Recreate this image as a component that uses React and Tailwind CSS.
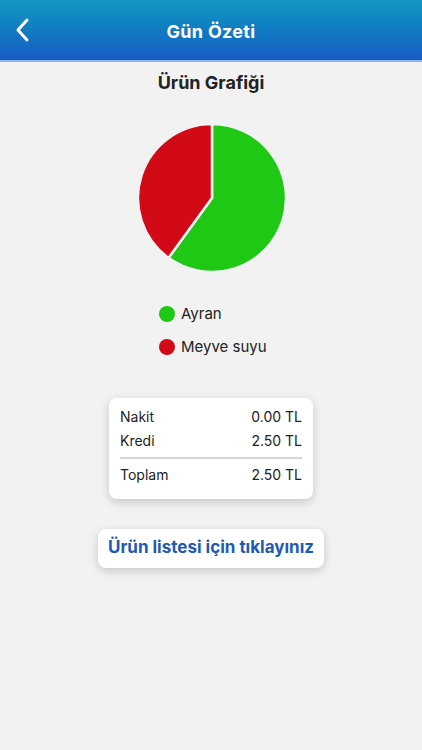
import React from "react";

const font = { fontFamily: "Inter, 'Noto Sans', sans-serif" };

const slices = [
  { name: "Ayran", value: 60, color: "#1ec814" },
  { name: "Meyve suyu", value: 40, color: "#d20a18" },
];

const PieChart = () => {
  const cx = 75;
  const cy = 75;
  const r = 74;
  const total = slices.reduce((s, x) => s + x.value, 0);
  let start = 0;

  return (
    <svg width="150" height="150" viewBox="0 0 150 150">
      {slices.map((s) => {
        const a0 = (start / total) * Math.PI * 2;
        start += s.value;
        const a1 = (start / total) * Math.PI * 2;
        const x0 = cx + r * Math.sin(a0);
        const y0 = cy - r * Math.cos(a0);
        const x1 = cx + r * Math.sin(a1);
        const y1 = cy - r * Math.cos(a1);
        const large = a1 - a0 > Math.PI ? 1 : 0;
        return (
          <path
            key={s.name}
            d={`M${cx},${cy} L${x0},${y0} A${r},${r} 0 ${large},1 ${x1},${y1} Z`}
            fill={s.color}
            stroke="#f2f2f2"
            strokeWidth="2.5"
            strokeLinejoin="round"
          />
        );
      })}
    </svg>
  );
};

const Row = ({ label, value }) => (
  <div className="flex items-center justify-between h-6 text-[14px] text-[#222]">
    <span>{label}</span>
    <span>{value}</span>
  </div>
);

export default function App() {
  return (
    <div className="w-[422px] h-[750px] bg-[#f2f2f2] flex flex-col" style={font}>
      {/* Header */}
      <div className="h-[62px] pt-[3px] bg-gradient-to-b from-[#1398c0] to-[#1a5bc4] border-b-2 border-[#8fb4ee] flex items-center relative">
        <button className="absolute left-[14px] top-[17px] text-white">
          <svg width="18" height="26" viewBox="0 0 18 26" fill="none">
            <path d="M13 3 L4 13 L13 23" stroke="white" strokeWidth="3" strokeLinecap="round" strokeLinejoin="round" />
          </svg>
        </button>
        <h1 className="flex-1 text-center text-white font-bold text-[18px] tracking-[0.3px]">Gün Özeti</h1>
      </div>

      {/* Title */}
      <h2 className="mt-[9px] text-center font-bold text-[18px] text-[#222] leading-[24px]">Ürün Grafiği</h2>

      {/* Chart */}
      <div className="mt-[28px] flex justify-center pl-[1px]">
        <PieChart />
      </div>

      {/* Legend */}
      <div className="mt-[33px] ml-[159px] flex flex-col gap-[17px]">
        {slices.map((s) => (
          <div key={s.name} className="flex items-center gap-[6px] h-4">
            <span className="w-4 h-4 rounded-full" style={{ backgroundColor: s.color }} />
            <span className="text-[15px] text-[#222]">{s.name}</span>
          </div>
        ))}
      </div>

      {/* Totals card */}
      <div className="mt-[43px] mx-auto w-[204px] bg-white rounded-[8px] shadow-[0_3px_10px_rgba(0,0,0,0.18)] px-[11px] pt-[6px] pb-[12px]">
        <Row label="Nakit" value="0.00 TL" />
        <Row label="Kredi" value="2.50 TL" />
        <div className="mt-[5px] mb-[4px] h-[1.5px] bg-[#d6d6d6]" />
        <Row label="Toplam" value="2.50 TL" />
      </div>

      {/* Product list button */}
      <div className="mt-[30px] flex justify-center">
        <button className="w-[226px] h-[39px] bg-white rounded-[8px] shadow-[0_3px_10px_rgba(0,0,0,0.18)] text-[#1f5ab4] font-bold text-[17px]">
          Ürün listesi için tıklayınız
        </button>
      </div>
    </div>
  );
}
